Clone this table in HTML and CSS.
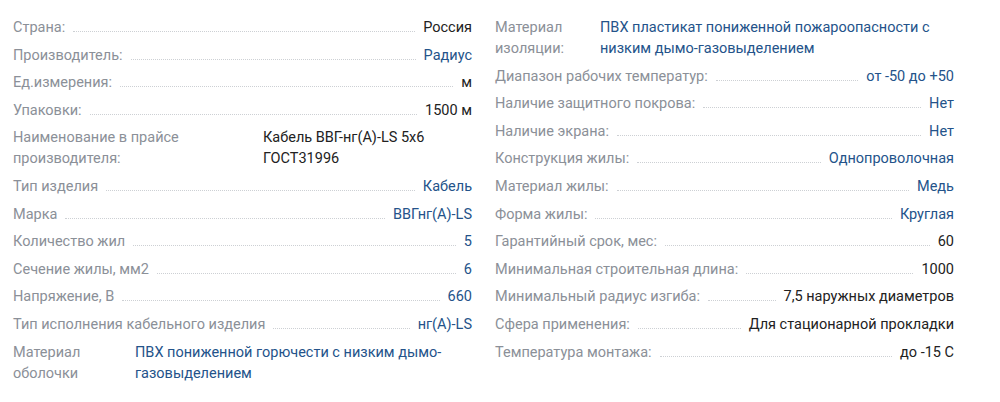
FILE: index.html
```
<!DOCTYPE html>
<html lang="ru">
<head>
<meta charset="utf-8">
<link rel="stylesheet" href="styles.css">
</head>
<body>
<div class="specs">
  <div class="col">
    <div class="row"><span class="label">Страна:</span><span class="dots"></span><span class="value">Россия</span></div>
    <div class="row"><span class="label">Производитель:</span><span class="dots"></span><span class="value link">Радиус</span></div>
    <div class="row"><span class="label">Ед.измерения:</span><span class="dots"></span><span class="value">м</span></div>
    <div class="row"><span class="label">Упаковки:</span><span class="dots"></span><span class="value">1500 м</span></div>
    <div class="row wrap"><span class="label lbl-name">Наименование в прайсе производителя:</span><span class="value">Кабель ВВГ-нг(А)-LS 5х6 ГОСТ31996</span></div>
    <div class="row"><span class="label">Тип изделия</span><span class="dots"></span><span class="value link">Кабель</span></div>
    <div class="row"><span class="label">Марка</span><span class="dots"></span><span class="value link">ВВГнг(А)-LS</span></div>
    <div class="row"><span class="label">Количество жил</span><span class="dots"></span><span class="value link">5</span></div>
    <div class="row"><span class="label">Сечение жилы, мм2</span><span class="dots"></span><span class="value link">6</span></div>
    <div class="row"><span class="label">Напряжение, В</span><span class="dots"></span><span class="value link">660</span></div>
    <div class="row"><span class="label">Тип исполнения кабельного изделия</span><span class="dots"></span><span class="value link">нг(А)-LS</span></div>
    <div class="row wrap"><span class="label lbl-sheath">Материал оболочки</span><span class="value link">ПВХ пониженной горючести с низким дымо-газовыделением</span></div>
  </div>
  <div class="col">
    <div class="row wrap"><span class="label lbl-insul">Материал изоляции:</span><span class="value link">ПВХ пластикат пониженной пожароопасности с низким дымо-газовыделением</span></div>
    <div class="row"><span class="label">Диапазон рабочих температур:</span><span class="dots"></span><span class="value link">от -50 до +50</span></div>
    <div class="row"><span class="label">Наличие защитного покрова:</span><span class="dots"></span><span class="value link">Нет</span></div>
    <div class="row"><span class="label">Наличие экрана:</span><span class="dots"></span><span class="value link">Нет</span></div>
    <div class="row"><span class="label">Конструкция жилы:</span><span class="dots"></span><span class="value link">Однопроволочная</span></div>
    <div class="row"><span class="label">Материал жилы:</span><span class="dots"></span><span class="value link">Медь</span></div>
    <div class="row"><span class="label">Форма жилы:</span><span class="dots"></span><span class="value link">Круглая</span></div>
    <div class="row"><span class="label">Гарантийный срок, мес:</span><span class="dots"></span><span class="value">60</span></div>
    <div class="row"><span class="label">Минимальная строительная длина:</span><span class="dots"></span><span class="value">1000</span></div>
    <div class="row"><span class="label">Минимальный радиус изгиба:</span><span class="dots"></span><span class="value">7,5 наружных диаметров</span></div>
    <div class="row"><span class="label">Сфера применения:</span><span class="dots"></span><span class="value">Для стационарной прокладки</span></div>
    <div class="row"><span class="label">Температура монтажа:</span><span class="dots"></span><span class="value">до -15 С</span></div>
  </div>
</div>
</body>
</html>
```

FILE: styles.css
```
html, body {
  margin: 0;
  padding: 0;
  background: #ffffff;
}
body {
  font-family: Roboto, "Liberation Sans", Arial, sans-serif;
  font-size: 14.5px;
  line-height: 21px;
  color: #222222;
}
.specs {
  display: flex;
  gap: 23px;
  padding: 17px 0 0 13px;
}
.col {
  width: 459px;
  display: flex;
  flex-direction: column;
}
.row {
  display: flex;
  align-items: baseline;
  margin-bottom: 6.6px;
}
.label {
  color: #8b9098;
  flex: 0 0 auto;
}
.dots {
  flex: 1 1 auto;
  border-bottom: 1px dotted #cdd0d4;
  margin: 0 8px;
  min-width: 10px;
}
.value {
  flex: 0 0 auto;
  color: #222222;
  text-align: right;
}
.value.link {
  color: #24538a;
}
.row.wrap .value {
  flex: 1 1 auto;
  text-align: left;
}
.lbl-name { flex: 0 0 250px; }
.lbl-sheath { flex: 0 0 122px; }
.lbl-insul { flex: 0 0 105px; }
```
